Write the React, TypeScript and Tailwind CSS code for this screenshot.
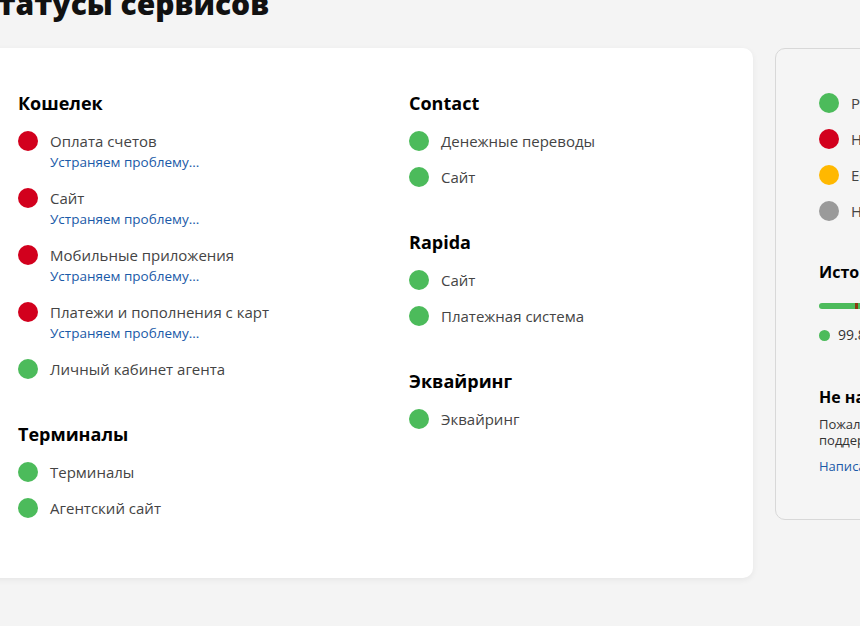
import React from "react";

type Status = "ok" | "down" | "warn" | "none";

type Service = {
  name: string;
  status: Status;
  note?: string;
};

type Group = {
  title: string;
  services: Service[];
};

const dotColor: Record<Status, string> = {
  ok: "bg-[#4cbb5b]",
  down: "bg-[#d2001d]",
  warn: "bg-[#ffb800]",
  none: "bg-[#9a9a9a]",
};

const fixing = "Устраняем проблему...";

const leftGroups: Group[] = [
  {
    title: "Кошелек",
    services: [
      { name: "Оплата счетов", status: "down", note: fixing },
      { name: "Сайт", status: "down", note: fixing },
      { name: "Мобильные приложения", status: "down", note: fixing },
      { name: "Платежи и пополнения с карт", status: "down", note: fixing },
      { name: "Личный кабинет агента", status: "ok" },
    ],
  },
  {
    title: "Терминалы",
    services: [
      { name: "Терминалы", status: "ok" },
      { name: "Агентский сайт", status: "ok" },
    ],
  },
];

const rightGroups: Group[] = [
  {
    title: "Contact",
    services: [
      { name: "Денежные переводы", status: "ok" },
      { name: "Сайт", status: "ok" },
    ],
  },
  {
    title: "Rapida",
    services: [
      { name: "Сайт", status: "ok" },
      { name: "Платежная система", status: "ok" },
    ],
  },
  {
    title: "Эквайринг",
    services: [{ name: "Эквайринг", status: "ok" }],
  },
];

const legend: { label: string; status: Status }[] = [
  { label: "Работает", status: "ok" },
  { label: "Не работает", status: "down" },
  { label: "Есть проблемы", status: "warn" },
  { label: "Нет данных", status: "none" },
];

function Dot({ status }: { status: Status }) {
  return <span className={`h-5 w-5 shrink-0 rounded-full ${dotColor[status]}`} />;
}

function ServiceRow({ service }: { service: Service }) {
  return (
    <div className="flex items-start gap-3">
      <Dot status={service.status} />
      <div className="flex flex-col">
        <span className="text-[15px] leading-5 text-[#444]">{service.name}</span>
        {service.note && (
          <span className="mt-[2px] text-[13.5px] leading-[19px] text-[#1b5aa8]">
            {service.note}
          </span>
        )}
      </div>
    </div>
  );
}

function ServiceGroup({ group }: { group: Group }) {
  return (
    <div className="flex flex-col">
      <h2 className="mb-4 text-[18px] font-bold leading-6 text-black">{group.title}</h2>
      <div className="flex flex-col gap-4">
        {group.services.map((s, i) => (
          <ServiceRow key={i} service={s} />
        ))}
      </div>
    </div>
  );
}

function Sidebar() {
  return (
    <aside className="w-[320px] shrink-0 self-start rounded-[10px] border border-[#d8d8d8] bg-[#f5f5f5] pb-[45px] pl-[43px] pr-6 pt-[44px]">
      <div className="flex flex-col gap-4">
        {legend.map((l) => (
          <div key={l.label} className="flex items-center gap-3">
            <Dot status={l.status} />
            <span className="text-[15px] leading-5 text-[#444]">{l.label}</span>
          </div>
        ))}
      </div>

      <h3 className="mt-[41px] text-[16px] font-bold leading-5 text-black">История за 90 дней</h3>
      <div className="mt-[21px] flex h-[6px] w-full overflow-hidden rounded-full bg-[#4cbb5b]">
        <span className="ml-[36px] h-full w-[3px] bg-[#8b3a10]" />
      </div>
      <div className="mt-[18px] flex items-center gap-2">
        <span className="h-[11px] w-[11px] rounded-full bg-[#4cbb5b]" />
        <span className="text-[14px] leading-4 text-[#333]">99.87% времени без сбоев</span>
      </div>

      <h3 className="mt-[44px] text-[16px] font-bold leading-5 text-black">Не нашли ответ?</h3>
      <p className="mt-[9px] text-[13px] leading-4 text-[#333]">
        Пожалуйста, обратитесь в службу
        <br />
        поддержки — мы поможем
      </p>
      <a className="mt-[10px] block text-[13px] leading-4 text-[#1b5aa8]" href="#">
        Написать в поддержку
      </a>
    </aside>
  );
}

export default function App() {
  return (
    <div
      className="h-[626px] w-[860px] overflow-hidden bg-[#f4f4f4]"
      style={{ fontFamily: '"Open Sans", "Noto Sans", sans-serif' }}
    >
      <div className="-ml-[22px] -mt-[16px]">
        <h1 className="text-[30px] font-extrabold leading-10 text-[#111]">Статусы сервисов</h1>
        <div className="mt-[24px] flex gap-[22px]">
          <main className="w-[775px] shrink-0 rounded-[10px] bg-white pb-[60px] pl-10 pr-10 pt-[43px] shadow-[0_2px_6px_rgba(0,0,0,0.06)]">
            <div className="grid grid-cols-[391px_1fr]">
              <div className="flex flex-col gap-[43px]">
                {leftGroups.map((g) => (
                  <ServiceGroup key={g.title} group={g} />
                ))}
              </div>
              <div className="flex flex-col gap-[43px]">
                {rightGroups.map((g) => (
                  <ServiceGroup key={g.title} group={g} />
                ))}
              </div>
            </div>
          </main>
          <Sidebar />
        </div>
      </div>
    </div>
  );
}
